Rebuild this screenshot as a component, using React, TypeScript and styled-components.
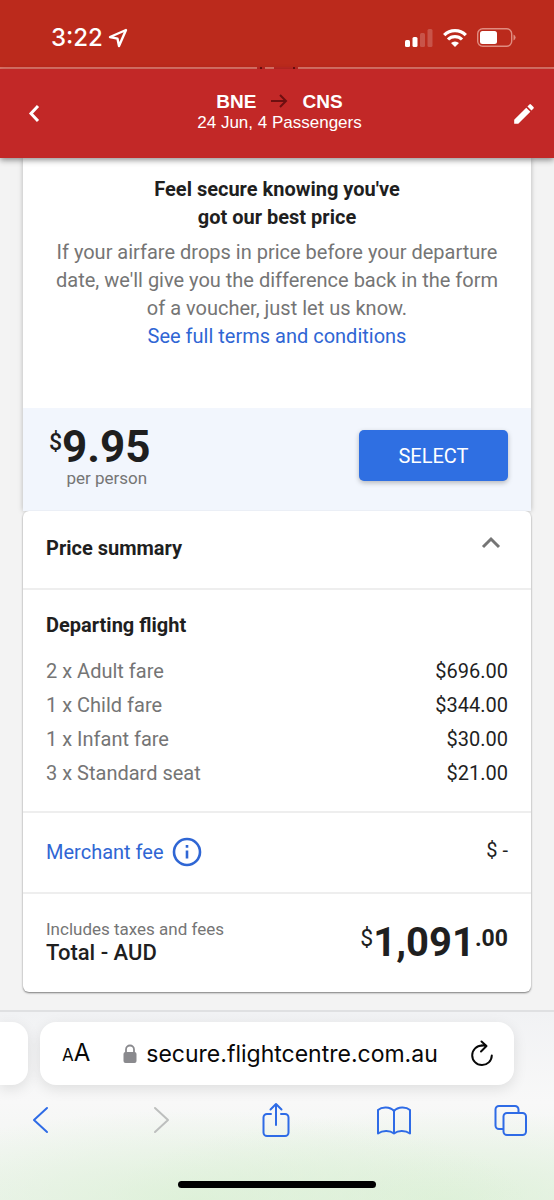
import React, { useState } from "react";
import styled, { createGlobalStyle } from "styled-components";

const ink = "#1f1f1f";
const grey = "#757575";
const blue = "#2f66d4";
const iosBlue = "#2e6be6";

const GlobalStyle = createGlobalStyle`
  *, *::before, *::after { box-sizing: border-box; }
  body {
    margin: 0;
    background: #f3f3f3;
    color: ${ink};
    font-family: Roboto, "Liberation Sans", sans-serif;
    font-size: 20px;
    line-height: 28px;
  }
  h1, h2, h3, p { margin: 0; }
  a { text-decoration: none; }
  button, input { font: inherit; color: inherit; }
`;

const Screen = styled.div`
  display: flex;
  flex-direction: column;
  min-height: 100vh;
`;

const StatusBar = styled.div`
  display: flex;
  align-items: center;
  justify-content: space-between;
  height: 67px;
  padding: 8px 38px 0 51px;
  background: #bb2a1c;
  color: #fff;
  font-family: Inter, "Liberation Sans", sans-serif;
`;

const Clock = styled.div`
  display: flex;
  align-items: center;
  gap: 5px;
  font-size: 24px;
  font-weight: 500;
`;

const StatusIcons = styled.div`
  display: flex;
  align-items: center;
  gap: 10px;
`;

const Seam = styled.div`
  display: flex;
  justify-content: center;
  gap: 3px;
  height: 2px;
  background: #c02825;
`;

const SeamLine = styled.span<{ $color?: string; $width?: number }>`
  flex: ${(p) => (p.$width ? `0 0 ${p.$width}px` : "1")};
  background: ${(p) => p.$color ?? "#df7468"};
`;

const AppHeader = styled.header`
  position: relative;
  z-index: 1;
  display: flex;
  align-items: center;
  justify-content: space-between;
  height: 89px;
  padding: 0 18px 0 23px;
  background: #c22827;
  color: #fff;
  box-shadow: 0 2px 6px rgba(0, 0, 0, 0.45);
`;

const IconButton = styled.button`
  display: flex;
  align-items: center;
  justify-content: center;
  padding: 0;
  border: 0;
  background: none;
  cursor: pointer;
`;

const RouteInfo = styled.div`
  display: flex;
  flex-direction: column;
  align-items: center;
  padding-bottom: 3px;
  font-family: "Liberation Sans", Arial, sans-serif;
  font-size: 17px;
  line-height: 21px;
`;

const Route = styled.h1`
  display: flex;
  align-items: center;
  gap: 14px;
  font-size: 19px;
  line-height: 21px;
  font-weight: 700;
`;

const Content = styled.main`
  flex: 1;
  padding: 0 23px 18px;
`;

const PromoCard = styled.section`
  background: #fff;
  box-shadow: 0 0 5px rgba(0, 0, 0, 0.26);
`;

const PromoText = styled.div`
  display: flex;
  flex-direction: column;
  gap: 7px;
  padding: 17px 24px 58px;
  text-align: center;
`;

const PromoTitle = styled.h2`
  align-self: center;
  max-width: 270px;
  font-size: 20px;
  line-height: 28px;
  font-weight: 700;
`;

const PromoBody = styled.p`
  color: ${grey};
`;

const TextLink = styled.a`
  color: ${blue};
`;

const OfferStrip = styled.div`
  display: flex;
  align-items: center;
  justify-content: space-between;
  height: 103px;
  padding: 0 23px 8px 26px;
  background: #f2f6fd;
`;

const Offer = styled.div`
  display: flex;
  flex-direction: column;
  align-items: center;
  padding-top: 2px;
`;

const Amount = styled.div<{ $size: number }>`
  display: flex;
  align-items: flex-start;
  font-size: ${(p) => p.$size}px;
  line-height: 42px;
  font-weight: 700;
`;

const Raised = styled.span<{ $size: number; $weight: number }>`
  font-size: ${(p) => p.$size}px;
  line-height: 34px;
  font-weight: ${(p) => p.$weight};
`;

const Caption = styled.span`
  color: ${grey};
  font-size: 17px;
  line-height: 20px;
`;

const OfferCaption = styled(Caption)`
  padding-left: 14px;
`;

const SelectButton = styled.button`
  width: 149px;
  height: 51px;
  border: 0;
  border-radius: 5px;
  background: #2f6fe2;
  color: #fff;
  box-shadow: 0 2px 5px rgba(0, 0, 0, 0.25);
  cursor: pointer;
`;

const SummaryCard = styled.section`
  border-radius: 6px;
  background: #fff;
  box-shadow: 0 1px 2px rgba(0, 0, 0, 0.5);
`;

const SummaryToggle = styled.button`
  display: flex;
  justify-content: space-between;
  width: 100%;
  padding: 23px 28px 26px 23px;
  border: 0;
  background: none;
  font-weight: 700;
  text-align: left;
  cursor: pointer;
`;

const Block = styled.div`
  padding: 21px 23px;
  border-top: 2px solid #eeeeee;
`;

const SplitBlock = styled(Block)`
  display: flex;
  align-items: center;
  justify-content: space-between;
`;

const FareTitle = styled.h3`
  font-size: 20px;
  line-height: 28px;
  font-weight: 700;
`;

const FareTable = styled.table`
  width: 100%;
  margin-top: 15px;
  border-collapse: collapse;
`;

const FareName = styled.th`
  height: 34px;
  padding: 0;
  color: ${grey};
  font-weight: 400;
  text-align: left;
`;

const FarePrice = styled.td`
  padding: 0;
  text-align: right;
`;

const FeeLink = styled(TextLink)`
  display: flex;
  align-items: center;
  gap: 8px;
  padding: 3px 0 4px;
`;

const FeeAmount = styled.span`
  padding-bottom: 6px;
`;

const TotalLabel = styled.div`
  display: flex;
  flex-direction: column;
  padding: 4px 0;
`;

const TotalName = styled.span`
  font-size: 22px;
  font-weight: 500;
`;

const BrowserBar = styled.footer`
  display: flex;
  flex-direction: column;
  height: 190px;
  border-top: 2px solid #dfe0e2;
  background:
    radial-gradient(ellipse 60% 90px at 35% 100%, rgba(218, 240, 212, 0.75), transparent),
    radial-gradient(ellipse 60% 90px at 80% 100%, rgba(218, 240, 212, 0.75), transparent),
    linear-gradient(#f1f2f4 0, #f8f8f8 90px, #eef4ed 100%);
`;

const AddressRow = styled.div`
  display: flex;
  gap: 12px;
  padding: 10px 40px 0 0;
`;

const NeighbourTab = styled.div`
  flex: 0 0 28px;
  border-radius: 0 16px 16px 0;
  background: #fff;
  box-shadow: 0 4px 14px rgba(0, 0, 0, 0.1);
`;

const AddressBar = styled.div`
  display: flex;
  flex: 1;
  align-items: center;
  min-width: 0;
  height: 63px;
  padding: 0 20px 0 22px;
  border-radius: 16px;
  background: #fff;
  box-shadow: 0 4px 14px rgba(0, 0, 0, 0.1);
  color: #080808;
  font-family: Inter, "Liberation Sans", sans-serif;
`;

const TextSizeButton = styled(IconButton)`
  align-items: baseline;
  margin-right: 33px;
  font-size: 24px;
`;

const SmallA = styled.span`
  font-size: 17px;
`;

const AddressInput = styled.input`
  flex: 1;
  min-width: 0;
  padding: 0 0 0 9px;
  border: 0;
  outline: 0;
  background: transparent;
  font-size: 23px;
`;

const Toolbar = styled.nav`
  display: flex;
  justify-content: space-between;
  padding: 17px 25px 0 23px;
  color: ${iosBlue};
`;

const HomeIndicator = styled.div`
  width: 198px;
  height: 7px;
  margin: auto auto 12px;
  border-radius: 4px;
  background: #000;
`;

type IconProps = {
  w: number;
  h: number;
  stroke?: number;
  color?: string;
  children: React.ReactNode;
};

const Icon = ({ w, h, stroke = 2, color = "currentColor", children }: IconProps) => (
  <svg
    width={w}
    height={h}
    viewBox={`0 0 ${w} ${h}`}
    fill="none"
    stroke={color}
    strokeWidth={stroke}
    strokeLinecap="round"
    strokeLinejoin="round"
    aria-hidden="true"
  >
    {children}
  </svg>
);

const fares = [
  { name: "2 x Adult fare", price: "$696.00" },
  { name: "1 x Child fare", price: "$344.00" },
  { name: "1 x Infant fare", price: "$30.00" },
  { name: "3 x Standard seat", price: "$21.00" },
];

export default function App() {
  const [open, setOpen] = useState(true);

  return (
    <Screen>
      <GlobalStyle />
      <StatusBar>
        <Clock>
          3:22
          <Icon w={20} h={20} stroke={2.4}>
            <path d="M18 2 2 9l7.500 1.700L11 18Z" />
          </Icon>
        </Clock>
        <StatusIcons>
          <Icon w={28} h={18} stroke={0}>
            <rect x="0" y="11" width="5" height="7" rx="1.500" fill="#fff" />
            <rect x="7.500" y="8" width="5" height="10" rx="1.500" fill="#fff" />
            <rect x="15" y="4" width="5" height="14" rx="1.500" fill="#fff" fillOpacity="0.2" />
            <rect x="22.500" y="0" width="5" height="18" rx="1.500" fill="#fff" fillOpacity="0.2" />
          </Icon>
          <Icon w={24} h={18} stroke={0}>
            <path d="M12 12.500a6 6 0 0 1 4 1.500L12 18 8 14A6 6 0 0 1 12 12.500Z" fill="#fff" />
            <path
              d="M1.200 6.200a15 15 0 0 1 21.600 0M5 10.500a9.800 9.800 0 0 1 14 0"
              stroke="#fff"
              strokeWidth="3.200"
              strokeLinecap="butt"
            />
          </Icon>
          <Icon w={39} h={19} stroke={0}>
            <rect x="0.700" y="0.700" width="34" height="17.600" rx="5" stroke="#e08c80" strokeWidth="1.400" />
            <rect x="3" y="3" width="17" height="13" rx="2.500" fill="#fff" />
            <path d="M36.500 6.500a3.200 3.200 0 0 1 0 6Z" fill="#e08c80" />
          </Icon>
        </StatusIcons>
      </StatusBar>
      <Seam>
        <SeamLine />
        <SeamLine $width={2} $color="#6d0f10" />
        <SeamLine $width={9} />
        <SeamLine $width={13} $color="#c02825" />
        <SeamLine $width={2} $color="#6d0f10" />
        <SeamLine />
      </Seam>
      <AppHeader>
        <IconButton aria-label="Back">
          <Icon w={24} h={24} stroke={3}>
            <path d="m15 4-7 7.500 7 7.500" strokeLinecap="butt" strokeLinejoin="miter" />
          </Icon>
        </IconButton>
        <RouteInfo>
          <Route>
            BNE
            <Icon w={18} h={16} stroke={2} color="#6d0f10">
              <path d="M1 7h15M10 1l6 6-6 6" strokeLinecap="butt" strokeLinejoin="miter" />
            </Icon>
            CNS
          </Route>
          24 Jun, 4 Passengers
        </RouteInfo>
        <IconButton aria-label="Edit search">
          <svg width="24" height="24" viewBox="1 1 22 22" fill="currentColor" aria-hidden="true">
            <path d="M3 17.250V21h3.750L17.810 9.940l-3.750-3.750L3 17.250zM20.710 7.040a1 1 0 0 0 0-1.410l-2.340-2.340a1 1 0 0 0-1.410 0l-1.830 1.830 3.750 3.750 1.830-1.830z" />
          </svg>
        </IconButton>
      </AppHeader>

      <Content>
        <PromoCard>
          <PromoText>
            <PromoTitle>Feel secure knowing you've got our best price</PromoTitle>
            <PromoBody>
              If your airfare drops in price before your departure date, we'll give you the
              difference back in the form of a voucher, just let us know.
              <br />
              <TextLink href="#terms">See full terms and conditions</TextLink>
            </PromoBody>
          </PromoText>
          <OfferStrip>
            <Offer>
              <Amount $size={44}>
                <Raised $size={23} $weight={500}>$</Raised>
                9.95
              </Amount>
              <OfferCaption>per person</OfferCaption>
            </Offer>
            <SelectButton>SELECT</SelectButton>
          </OfferStrip>
        </PromoCard>

        <SummaryCard>
          <SummaryToggle aria-expanded={open} onClick={() => setOpen(!open)}>
            Price summary
            <Icon w={24} h={24} stroke={3} color={grey}>
              <path d={open ? "m4 13 8-8 8 8" : "m4 5 8 8 8-8"} strokeLinecap="butt" strokeLinejoin="miter" />
            </Icon>
          </SummaryToggle>
          {open && (
            <Block>
              <FareTitle id="fares">Departing flight</FareTitle>
              <FareTable aria-labelledby="fares">
                <tbody>
                  {fares.map((fare) => (
                    <tr key={fare.name}>
                      <FareName scope="row">{fare.name}</FareName>
                      <FarePrice>{fare.price}</FarePrice>
                    </tr>
                  ))}
                </tbody>
              </FareTable>
            </Block>
          )}
          <SplitBlock>
            <FeeLink href="#merchant-fee">
              Merchant fee
              <Icon w={30} h={30} stroke={2.6}>
                <circle cx="15" cy="15" r="13" />
                <path d="M15 13.500v8M15 8v2.800" strokeLinecap="butt" />
              </Icon>
            </FeeLink>
            <FeeAmount>$ -</FeeAmount>
          </SplitBlock>
          <SplitBlock>
            <TotalLabel>
              <Caption>Includes taxes and fees</Caption>
              <TotalName>Total - AUD</TotalName>
            </TotalLabel>
            <Amount $size={40}>
              <Raised $size={23} $weight={400}>$</Raised>
              1,091
              <Raised $size={23} $weight={700}>.00</Raised>
            </Amount>
          </SplitBlock>
        </SummaryCard>
      </Content>

      <BrowserBar>
        <AddressRow>
          <NeighbourTab />
          <AddressBar>
            <TextSizeButton aria-label="Page settings">
              <SmallA>A</SmallA>A
            </TextSizeButton>
            <Icon w={14} h={19} stroke={0}>
              <rect x="0.500" y="8" width="13" height="11" rx="2" fill="#8a8a8e" />
              <path d="M3 9V5.500a4 4 0 0 1 8 0V9" stroke="#8a8a8e" strokeWidth="1.800" />
            </Icon>
            <AddressInput aria-label="Address" defaultValue="secure.flightcentre.com.au" />
            <IconButton aria-label="Reload">
              <Icon w={24} h={28} stroke={2}>
                <path d="M12 5.500A9.800 9.800 0 1 0 21.800 15.500" />
                <path d="M11.500 1.500 16.500 6l-5.500 5.500M12 5.500h4" />
              </Icon>
            </IconButton>
          </AddressBar>
        </AddressRow>
        <Toolbar aria-label="Browser">
          <IconButton aria-label="Previous page">
            <Icon w={36} h={36} stroke={2}>
              <path d="M24 6 11 18l13 12" />
            </Icon>
          </IconButton>
          <IconButton aria-label="Next page">
            <Icon w={36} h={36} stroke={2} color="#bdbfbe">
              <path d="m14 6 13 12-13 12" />
            </Icon>
          </IconButton>
          <IconButton aria-label="Share">
            <Icon w={36} h={36} stroke={2}>
              <path d="M13 12H9a3.500 3.500 0 0 0-3.500 3.500v15A3.500 3.500 0 0 0 9 34h18a3.500 3.500 0 0 0 3.500-3.500v-15A3.500 3.500 0 0 0 27 12h-4" />
              <path d="M18 23V2M12.500 7.500 18 2l5.500 5.500" />
            </Icon>
          </IconButton>
          <IconButton aria-label="Bookmarks">
            <Icon w={36} h={36} stroke={2}>
              <path d="M18 9C14 4.500 6 4.500 2 8v23.500c5-3.500 12-3 16 0 4-3 11-3.500 16 0V8C30 4.500 22 4.500 18 9ZM18 9v22.500" />
            </Icon>
          </IconButton>
          <IconButton aria-label="Tabs">
            <Icon w={36} h={36} stroke={2}>
              <rect x="10.500" y="11" width="22.500" height="22" rx="3.500" />
              <path d="M10 27H6a3.500 3.500 0 0 1-3.500-3.500v-16A3.500 3.500 0 0 1 6 4h16a3.500 3.500 0 0 1 3.500 3.500V11" />
            </Icon>
          </IconButton>
        </Toolbar>
        <HomeIndicator />
      </BrowserBar>
    </Screen>
  );
}
